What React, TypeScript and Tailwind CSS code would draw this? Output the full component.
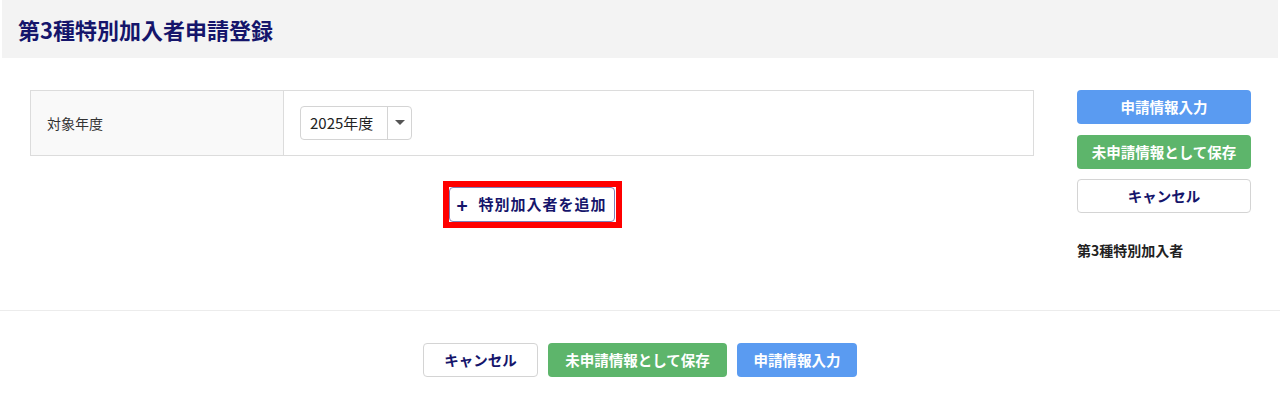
import React, { useState } from 'react';

const font = { fontFamily: '"Noto Sans CJK JP", "Noto Sans", sans-serif' };

const App = () => {
  const [year, setYear] = useState('2025');

  return (
    <div className="w-[1280px] h-[394px] bg-white" style={font}>
      {/* ヘッダー */}
      <div className="mx-[2px] h-[58px] bg-[#f3f3f3] flex items-center pl-4">
        <h1 className="text-[22px] font-bold text-[#15156b]">第3種特別加入者申請登録</h1>
      </div>

      <div className="h-[252px] flex pt-8 pl-[30px] pr-[29px]">
        <div className="w-[1004px] flex flex-col">
          <div className="h-[66px] flex border border-[#dcdcdc]">
            <div className="w-[253px] bg-[#f9f9f9] border-r border-[#dcdcdc] flex items-center pl-4 text-[14px] text-[#333]">
              対象年度
            </div>
            <div className="flex-1 flex items-center pl-4">
              <div className="relative h-[34px] w-[112px] flex border border-[#d4d4d4] rounded-[4px]">
                <select
                  value={year}
                  onChange={(e) => setYear(e.target.value)}
                  className="appearance-none bg-transparent pl-[9px] pr-[28px] w-full text-[15px] text-[#222] outline-none"
                >
                  <option value="2025">2025年度</option>
                  <option value="2024">2024年度</option>
                </select>
                <span className="absolute right-0 top-0 bottom-0 w-[24px] border-l border-[#d4d4d4] flex items-center justify-center pointer-events-none">
                  <svg width="10" height="6" viewBox="0 0 10 6">
                    <path d="M0 0 L10 0 L5 5 Z" fill="#555" />
                  </svg>
                </span>
              </div>
            </div>
          </div>

          <div className="flex justify-center mt-[25px]">
            <div className="border-[6px] border-[#ff0000] pr-[1px]">
              <button className="h-[35px] w-[166px] border border-[#7f80b8] rounded-[4px] bg-white flex items-center justify-center gap-[10px] text-[#15156b] font-bold text-[15px] tracking-[1px]">
                <span className="text-[19px] font-bold leading-none">+</span>
                <span>特別加入者を追加</span>
              </button>
            </div>
          </div>
        </div>

        <div className="ml-[43px] w-[174px] flex flex-col">
          <button className="h-[34px] rounded-[4px] bg-[#5a9bf1] text-white font-bold text-[14.5px]">申請情報入力</button>
          <button className="h-[34px] mt-[11px] rounded-[4px] bg-[#5db56b] text-white font-bold text-[14.5px]">未申請情報として保存</button>
          <button className="h-[34px] mt-[10px] rounded-[4px] bg-white border border-[#d4d4d4] text-[#15156b] font-bold text-[14.5px]">キャンセル</button>
          <p className="mt-[27px] text-[14px] font-bold text-[#222]">第3種特別加入者</p>
        </div>
      </div>

      <div className="border-t border-[#ececec] pt-8 flex justify-center gap-[10px]">
        <button className="h-[34px] w-[115px] rounded-[4px] bg-white border border-[#d4d4d4] text-[#15156b] font-bold text-[14.5px]">キャンセル</button>
        <button className="h-[34px] w-[179px] rounded-[4px] bg-[#5db56b] text-white font-bold text-[14.5px]">未申請情報として保存</button>
        <button className="h-[34px] w-[120px] rounded-[4px] bg-[#5a9bf1] text-white font-bold text-[14.5px]">申請情報入力</button>
      </div>
    </div>
  );
};

export default App;
